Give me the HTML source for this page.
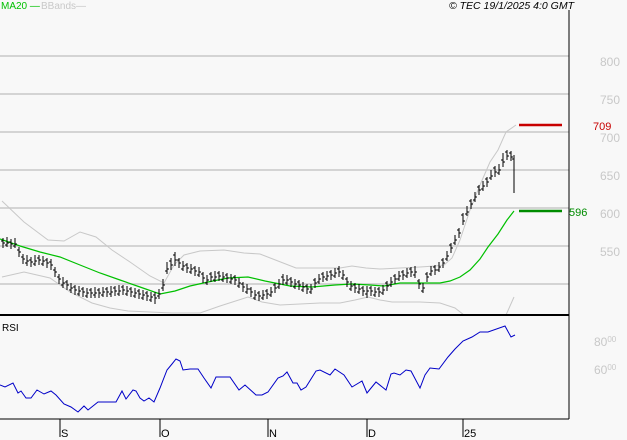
<!DOCTYPE html>
<html><head><meta charset="utf-8"><style>
html,body{margin:0;padding:0;background:#f8f8f8;}
body{width:627px;height:440px;overflow:hidden;position:relative;font-family:"Liberation Sans",sans-serif;}
svg{position:absolute;left:0;top:0;}
</style></head><body>
<svg width="627" height="440" xmlns="http://www.w3.org/2000/svg" font-family="Liberation Sans, sans-serif">
<g stroke="#c8c8c8" stroke-width="1.5">
<line x1="0" y1="56" x2="569" y2="56"/><line x1="0" y1="94" x2="569" y2="94"/><line x1="0" y1="132" x2="569" y2="132"/><line x1="0" y1="170" x2="569" y2="170"/><line x1="0" y1="208" x2="569" y2="208"/><line x1="0" y1="246" x2="569" y2="246"/><line x1="0" y1="284" x2="569" y2="284"/>
</g>
<g fill="#c8c8c8" font-size="12">
<text x="600" y="66">800</text><text x="600" y="104">750</text><text x="600" y="142">700</text><text x="600" y="180">650</text><text x="600" y="218">600</text><text x="600" y="256">550</text>
<text x="594" y="346">80<tspan font-size="8" dy="-4">00</tspan></text>
<text x="594" y="374">60<tspan font-size="8" dy="-4">00</tspan></text>
</g>
<polyline fill="none" stroke="#c8c8c8" stroke-width="1" points="2,201 24,222 48,240 64,241 80,232 96,237 112,250 130,262 150,276 164,283 174,265 184,255 200,251 224,250 244,253 260,254 278,261 296,268 320,268 340,268 352,266 366,268 380,269 400,268 420,267 435,266 444,265 452,258 460,240 470,210 480,185 490,162 498,150 506,132 516,125"/>
<polyline fill="none" stroke="#c8c8c8" stroke-width="1" points="2,277 24,272 50,278 70,292 92,303 110,308 128,311 150,312 172,313 200,313 220,306 248,297 262,302 280,305 300,304 320,303 340,303 355,300 368,297 380,300 392,302 420,302 440,303 455,308 464,315"/>
<polyline fill="none" stroke="#c8c8c8" stroke-width="1" points="506,315 510,306 514,297"/>
<polyline fill="none" stroke="#00c000" stroke-width="1.2" points="0,239 20,246 40,252 60,257 80,265 100,273 120,280 140,287 160,294 175,291 190,286 208,282 228,278 248,277 265,281 290,286 312,287 335,285 352,284 370,285 384,286 400,283 420,283 440,283 450,281 460,277 470,270 480,259 488,247 498,234 507,220 514,211"/>
<path stroke="#000" stroke-width="1" fill="none" shape-rendering="crispEdges" d="
M3 238V248M1 241h2M3 243h2 M7 237V247M5 245h2M7 243h2 M11 239V249M9 242h2M11 244h2 M15 238V248M13 246h2M15 244h2 M19 247V257M17 250h2M19 252h2 M23 254V264M21 257h2M23 259h2 M27 255V266M25 263h2M27 261h2 M31 257V267M29 260h2M31 262h2 M35 255V266M33 264h2M35 261h2 M39 255V265M37 258h2M39 260h2 M43 256V266M41 264h2M43 261h2 M47 258V268M45 260h2M47 263h2 M51 259V270M49 262h2M51 265h2 M55 267V277M53 270h2M55 272h2 M59 274V284M57 277h2M59 279h2 M63 277V288M61 285h2M63 283h2 M67 280V290M65 282h2M67 285h2 M71 283V293M69 290h2M71 288h2 M75 285V295M73 287h2M75 290h2 M79 286V296M77 294h2M79 291h2 M83 287V297M81 289h2M83 292h2 M87 288V298M85 296h2M87 293h2 M91 288V298M89 290h2M91 293h2 M95 287V298M93 295h2M95 293h2 M99 288V298M97 290h2M99 293h2 M103 287V297M101 295h2M103 292h2 M107 287V297M105 289h2M107 292h2 M111 286V297M109 294h2M111 292h2 M115 286V296M113 288h2M115 291h2 M119 285V296M117 294h2M119 291h2 M123 285V295M121 287h2M123 290h2 M127 286V296M125 294h2M127 291h2 M131 287V297M129 289h2M131 292h2 M135 288V298M133 296h2M135 293h2 M139 289V299M137 291h2M139 294h2 M143 290V300M141 298h2M143 295h2 M147 291V301M145 293h2M147 296h2 M151 292V302M149 300h2M151 297h2 M155 292V304M153 295h2M155 298h2 M159 289V299M157 296h2M159 294h2 M163 279V291M161 288h2M163 285h2 M167 262V274M165 271h2M167 269h2 M171 258V270M169 261h2M171 265h2 M175 252V266M173 255h2M175 260h2 M179 258V268M177 260h2M179 263h2 M183 261V271M181 269h2M183 266h2 M187 263V273M185 265h2M187 268h2 M191 264V274M189 272h2M191 269h2 M195 266V276M193 268h2M195 271h2 M199 267V277M197 275h2M199 272h2 M203 272V283M201 274h2M203 278h2 M207 275V285M205 283h2M207 280h2 M211 272V282M209 274h2M211 277h2 M215 271V282M213 280h2M215 277h2 M219 271V281M217 273h2M219 276h2 M223 272V282M221 280h2M223 277h2 M227 273V283M225 275h2M227 278h2 M231 274V284M229 282h2M231 279h2 M235 275V285M233 277h2M235 280h2 M239 278V288M237 286h2M239 283h2 M243 282V292M241 284h2M243 287h2 M247 284V294M245 292h2M247 289h2 M251 287V297M249 289h2M251 292h2 M255 290V300M253 298h2M255 295h2 M259 291V301M257 293h2M259 296h2 M263 290V300M261 298h2M263 295h2 M267 289V299M265 291h2M267 294h2 M271 287V297M269 295h2M271 292h2 M275 283V293M273 285h2M275 288h2 M279 279V289M277 287h2M279 284h2 M283 274V285M281 277h2M283 280h2 M287 275V285M285 283h2M287 280h2 M291 277V287M289 279h2M291 282h2 M295 279V289M293 287h2M295 284h2 M299 280V290M297 282h2M299 285h2 M303 282V292M301 290h2M303 287h2 M307 284V294M305 286h2M307 289h2 M311 284V294M309 292h2M311 289h2 M315 278V288M313 280h2M315 283h2 M319 274V284M317 282h2M319 279h2 M323 272V282M321 274h2M323 277h2 M327 271V281M325 279h2M327 276h2 M331 270V280M329 272h2M331 275h2 M335 268V278M333 276h2M335 273h2 M339 266V277M337 269h2M339 272h2 M343 270V280M341 278h2M343 275h2 M347 277V287M345 279h2M347 282h2 M351 281V291M349 289h2M351 286h2 M355 283V293M353 285h2M355 288h2 M359 284V294M357 292h2M359 289h2 M363 286V296M361 288h2M363 291h2 M367 286V298M365 294h2M367 291h2 M371 286V296M369 288h2M371 291h2 M375 287V297M373 295h2M375 292h2 M379 287V297M377 289h2M379 292h2 M383 285V295M381 293h2M383 290h2 M387 281V291M385 283h2M387 286h2 M391 277V287M389 285h2M391 282h2 M395 274V284M393 276h2M395 279h2 M399 271V281M397 279h2M399 276h2 M403 270V280M401 272h2M403 275h2 M407 268V278M405 276h2M407 273h2 M411 267V277M409 269h2M411 272h2 M415 266V278M413 275h2M415 272h2 M419 279V289M417 281h2M419 284h2 M423 283V293M421 291h2M423 288h2 M427 272V282M425 274h2M427 277h2 M431 266V276M429 274h2M431 271h2 M435 265V275M433 267h2M435 270h2 M439 262V272M437 270h2M439 267h2 M443 258V268M441 260h2M443 263h2 M447 251V261M445 259h2M447 256h2 M451 243V253M449 245h2M451 248h2 M455 235V245M453 243h2M455 240h2 M459 228V238M457 230h2M459 233h2 M463 213V225M461 215h2M463 221h2 M467 206V216M465 214h2M467 212h2 M471 199V209M469 201h2M471 204h2 M475 192V202M473 200h2M475 197h2 M479 185V195M477 187h2M479 190h2 M483 181V191M481 189h2M483 186h2 M487 177V187M485 179h2M487 182h2 M491 170V180M489 178h2M491 176h2 M495 166V177M493 168h2M495 172h2 M499 164V175M497 173h2M499 170h2 M503 153V167M501 160h2M503 162h2 M507 150V160M505 152h2M507 156h2 M511 151V161M509 153h2M511 157h2 M514 155V193M512 159h2"/>
<line x1="519" y1="125" x2="562" y2="125" stroke="#c80000" stroke-width="2.5"/>
<line x1="519" y1="211" x2="562" y2="211" stroke="#008c00" stroke-width="2.5"/>
<text x="593" y="130" fill="#c80000" font-size="11">709</text>
<text x="569" y="216" fill="#008c00" font-size="11">596</text>
<line x1="569" y1="10" x2="569" y2="419" stroke="#000" stroke-width="1"/>
<line x1="0" y1="315" x2="569" y2="315" stroke="#000" stroke-width="2"/>
<line x1="0" y1="419" x2="569" y2="419" stroke="#000" stroke-width="1"/>
<text x="1" y="9" fill="#00c000" font-size="10">MA20 —</text>
<text x="41" y="9" fill="#c8c8c8" font-size="10">BBands—</text>
<text x="574" y="9" fill="#000" font-size="10.5" font-style="italic" text-anchor="end">© TEC 19/1/2025 4:0 GMT</text>
<text x="2" y="331" fill="#000" font-size="10">RSI</text>
<polyline fill="none" stroke="#0000c8" stroke-width="1" points="0,385 5,387 13,383 18,393 21,391 26,398 31,398 37,390 44,394 51,391 56,395 64,404 71,407 78,412 84,406 88,410 98,402 116,402 122,391 126,399 133,390 136,391 140,398 144,401 149,398 154,402 160,388 167,370 172,364 176,359 180,361 183,370 190,369 198,369 204,378 211,388 216,377 230,377 239,390 245,385 256,395 262,395 268,392 278,378 283,376 287,372 293,383 297,383 301,390 306,387 316,371 320,370 330,375 335,369 344,375 352,387 362,381 367,393 376,382 386,390 391,374 394,373 400,375 406,370 411,371 420,388 425,375 430,368 439,369 448,357 455,349 463,341 472,337 480,332 488,332 505,326 511,337 515,335"/>
<g stroke="#000" stroke-width="1">
<line x1="60" y1="419" x2="60" y2="437"/><line x1="160" y1="419" x2="160" y2="437"/><line x1="268" y1="419" x2="268" y2="437"/><line x1="367" y1="419" x2="367" y2="437"/><line x1="463" y1="419" x2="463" y2="437"/>
</g>
<g font-size="11" fill="#000"><text x="61" y="437">S</text><text x="161" y="437">O</text><text x="269" y="437">N</text><text x="368" y="437">D</text><text x="464" y="437">25</text></g>
</svg>
</body></html>
